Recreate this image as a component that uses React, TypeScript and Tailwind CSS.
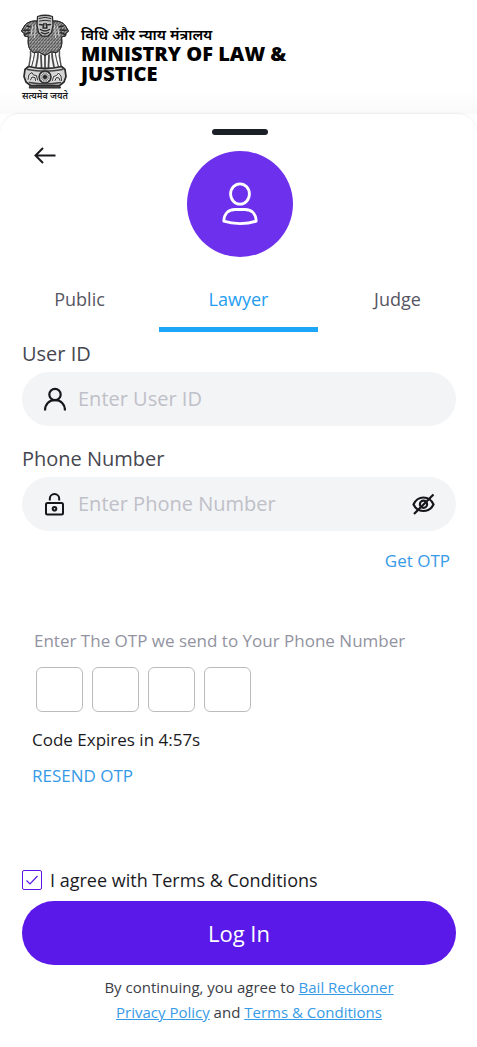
import { useState, type ReactNode } from "react";

function Emblem() {
  return (
    <svg viewBox="0 0 96 150" className="h-[75px] w-12" fill="none" stroke="#2b2b2b" strokeWidth="2" strokeLinecap="round" strokeLinejoin="round" role="img" aria-label="State Emblem of India">
      <defs>
        <pattern id="mane" width="6" height="7" patternUnits="userSpaceOnUse">
          <path d="M0 0q1 5 3 7M3 0q1 4 3 6" stroke="#3a3a3a" strokeWidth="1.600" />
        </pattern>
      </defs>
      <path d="M27 72c1 14-4 24-7 38h56c-3-14-8-24-7-38z" fill="#f4f4f4" strokeWidth="2" />
      <path d="M34 79c0 10-3 20-4 27M40 82c0 9 1 17 1 25M48 82v25M56 82c0 9-1 17-1 25M62 79c0 10 3 20 4 27" strokeWidth="3.500" stroke="#4a4a4a" />
      <path d="M19 75c2 12-3 20-3 31M77 75c-2 12 3 20 3 31" strokeWidth="3" stroke="#555" />
      <path d="M31 14C22 13 11 17 7 24L1 34l5 5 1 5 8 2c-2 14 0 26 10 31l11-1 12 7 12-7 11 1c10-5 12-17 10-31l8-2 1-5 5-5-6-10c-4-7-15-11-24-10z" fill="#b8b8b8" />
      <path d="M31 14C22 13 11 17 7 24L1 34l5 5 1 5 8 2c-2 14 0 26 10 31l11-1 12 7 12-7 11 1c10-5 12-17 10-31l8-2 1-5 5-5-6-10c-4-7-15-11-24-10z" fill="url(#mane)" />
      <path d="M33 5q15-5 30 0l1 18-3 14-7 7H42l-7-7-3-14z" fill="#c4c4c4" strokeWidth="2.500" />
      <path d="M36 9q12-5 24 0M37 14q11-3 22 0" strokeWidth="2" />
      <path d="M37 21l8 1m6 0 8-1M46 19l-2 9h8l-2-9M39 31q9 6 18 0M41 37q7 5 14 0" strokeWidth="3" />
      <path d="M12 24l8 2M6 33l11-1M8 41l9-4M84 24l-8 2M90 33l-11-1M88 41l-9-4" strokeWidth="3" />
      <path d="M23 24l-3 20M29 23l-2 24M73 24l3 20M67 23l2 24" stroke="#eee" strokeWidth="1.500" />
      <path d="M15 105q33 8 66 0l7 6 2 14-4 11-9 7H19l-9-7-4-11 2-14z" fill="#d4d4d4" strokeWidth="3.500" />
      <path d="M13 111q35 7 70 0M17 137q31 6 62 0" strokeWidth="3" stroke="#444" />
      <circle cx="48" cy="126" r="12" fill="#e4e4e4" strokeWidth="3" />
      <circle cx="48" cy="126" r="3" fill="#222" />
      <path d="M48 115v22M37 126h22M40 118l16 16M56 118l-16 16M44 116l8 20M52 116l-8 20M38 122l20 8M58 122l-20 8" strokeWidth="1" />
      <path d="M14 131l2-10 6-4 3 5 6 1 2 9M19 132l3-6 6 1 1 6M63 133l2-8 6-2 4-5 5 6 1 9M68 133l3-6 5 1 2 5" stroke="#f0f0f0" strokeWidth="4" />
      <path d="M14 131l2-10 6-4 3 5 6 1 2 9M19 132l3-6 6 1 1 6M63 133l2-8 6-2 4-5 5 6 1 9M68 133l3-6 5 1 2 5" strokeWidth="2" />
      <path d="M19 143h58l2 5H17z" fill="#444" />
    </svg>
  );
}

function BackArrow() {
  return (
    <svg viewBox="0 0 24 24" className="size-6" fill="none" stroke="#1b1b1f" strokeWidth="2">
      <path d="M22.500 12.500H2.500M10 5l-7.500 7.500L10 20" />
    </svg>
  );
}

function AvatarIcon() {
  return (
    <svg viewBox="0 0 40 48" className="h-12 w-10" fill="none" stroke="#fff" strokeWidth="2.800">
      <ellipse cx="20" cy="14" rx="9.400" ry="10.200" />
      <path d="M15 29.500h10c7 0 11 4.500 11.200 11.700-9.500 3.100-22.900 3.100-32.400 0C4 34 8 29.500 15 29.500z" strokeLinejoin="round" />
    </svg>
  );
}

function UserIcon() {
  return (
    <svg viewBox="0 0 24 24" className="size-6" fill="none" stroke="#17171b" strokeWidth="2.200">
      <circle cx="13" cy="7.500" r="5.700" />
      <path d="M3 23.500c0-6.500 4-10.300 10-10.300s10 3.800 10 10.300" />
    </svg>
  );
}

function LockIcon() {
  return (
    <svg viewBox="0 0 24 24" className="size-6" fill="none" stroke="#17171b" strokeWidth="2">
      <rect x="4" y="11" width="17" height="11.500" rx="1.500" />
      <path d="M7.800 8.500V6.800a4.700 4.700 0 0 1 9.400 0V8.500" />
      <circle cx="12.500" cy="16.800" r="1.800" />
    </svg>
  );
}

function HiddenIcon() {
  return (
    <svg viewBox="0 0 24 24" className="size-6" fill="none" stroke="#17171b" strokeWidth="2.200">
      <path d="M1.500 12.500C3.500 8 7 5.500 11.500 5.500s8 2.500 10 7c-2 4-5.500 6.500-10 6.500s-8-2.500-10-6.500z" strokeLinejoin="round" />
      <circle cx="11.500" cy="12.200" r="3.600" />
      <path d="M2 22 21.500 2.500" />
    </svg>
  );
}

function Field({ id, label, icon, type, placeholder, children }: {
  id: string; label: string; icon: ReactNode; type: string; placeholder: string; children?: ReactNode;
}) {
  return (
    <div>
      <label htmlFor={id} className="block text-xl leading-7 text-[#464750]">{label}</label>
      <div className="mt-1 flex h-[54px] items-center gap-3 rounded-full bg-[#f3f4f6] px-5">
        {icon}
        <input id={id} type={type} placeholder={placeholder} className="min-w-0 flex-1 bg-transparent text-xl text-[#464750] outline-none placeholder:text-[#bfc0c8]" />
        {children}
      </div>
    </div>
  );
}

const roles = ["Public", "Lawyer", "Judge"];

export default function App() {
  const [role, setRole] = useState("Lawyer");
  const [visible, setVisible] = useState(false);
  return (
    <div className="min-h-screen bg-white font-['Open_Sans','Noto_Sans',sans-serif] text-[#1b1b1f]">
      <header className="flex h-[114px] items-start gap-3 bg-linear-to-b from-white from-80% to-[#f9f9f9] px-[21px] pt-3.5">
        <div className="flex w-12 shrink-0 flex-col items-center">
          <Emblem />
          <span className="text-[9px] leading-[14px] font-semibold whitespace-nowrap">सत्यमेव जयते</span>
        </div>
        <div className="pt-2.5 text-black">
          <p className="text-[15px] leading-5 font-semibold">विधि और न्याय मंत्रालय</p>
          <h1 className="text-xl leading-5 font-extrabold">MINISTRY OF LAW &amp;<br />JUSTICE</h1>
        </div>
      </header>

      <main className="rounded-t-[20px] bg-white shadow-[0_-1px_2px_rgba(0,0,0,0.06)]">
        <div className="flex justify-center pt-[15px] pl-0.5">
          <div className="h-1.5 w-14 rounded-full bg-[#1b1f26]" />
        </div>
        <div className="grid grid-cols-[1fr_auto_1fr] items-start pt-2 pr-[31px] pl-[33px]">
          <button type="button" aria-label="Back" className="size-6 justify-self-start"><BackArrow /></button>
          <div className="mt-2 flex size-[106px] items-center justify-center rounded-full bg-[#6d31ed]"><AvatarIcon /></div>
        </div>

        <div role="tablist" className="mt-[18px] grid grid-cols-3">
          {roles.map((r) => (
            <button
              key={r}
              type="button"
              role="tab"
              aria-selected={role === r}
              onClick={() => setRole(r)}
              className={role === r
                ? "h-[57px] border-b-5 border-[#1da6f8] pb-1 text-lg leading-6 text-[#1f9df0]"
                : "h-[57px] border-b-5 border-transparent pb-1 text-lg leading-6 text-[#555661]"}
            >
              {r}
            </button>
          ))}
        </div>

        <form className="pt-2 pr-[21px] pb-5 pl-[22px]" onSubmit={(e) => e.preventDefault()}>
          <div className="flex flex-col gap-[19px]">
            <Field id="user-id" label="User ID" icon={<UserIcon />} type="text" placeholder="Enter User ID" />
            <Field id="phone" label="Phone Number" icon={<LockIcon />} type={visible ? "text" : "password"} placeholder="Enter Phone Number">
              <button type="button" aria-label="Show phone number" onClick={() => setVisible(!visible)}><HiddenIcon /></button>
            </Field>
          </div>
          <div className="mt-[18px] flex justify-end pr-1.5">
            <button type="button" className="text-[17px] leading-6 text-[#379ae6]">Get OTP</button>
          </div>

          <fieldset className="mt-14 pl-3">
            <legend className="text-[17px] leading-6 text-[#9293a0]">Enter The OTP we send to Your Phone Number</legend>
            <div className="mt-3.5 flex gap-[9px] pl-0.5">
              {[1, 2, 3, 4].map((n) => (
                <input key={n} aria-label={`Digit ${n}`} inputMode="numeric" maxLength={1} className="h-[45px] w-[47px] rounded-md border border-[#bcbcc0] text-center text-lg" />
              ))}
            </div>
          </fieldset>
          <div className="flex flex-col items-start gap-3 pt-4 pl-2.5">
            <p className="text-[17px] leading-6">Code Expires in 4:57s</p>
            <button type="button" className="text-[17px] leading-6 text-[#379ae6]">RESEND OTP</button>
          </div>

          <label className="mt-20 flex items-center gap-2 text-lg leading-6">
            <span className="relative flex size-5">
              <input type="checkbox" defaultChecked className="peer size-5 appearance-none rounded-xs border border-[#5a18e9]" />
              <svg viewBox="0 0 20 20" className="pointer-events-none absolute inset-0 size-5 opacity-0 peer-checked:opacity-100" fill="none" stroke="#5a18e9" strokeWidth="1.200">
                <path d="M4.500 10.500 8 14l7.500-8" />
              </svg>
            </span>
            I agree with Terms &amp; Conditions
          </label>
          <button type="submit" className="mt-[9px] h-16 w-full rounded-full bg-[#5a18e9] text-[22px] text-white">Log In</button>
          <p className="mt-2.5 pl-5 text-center text-[15px] leading-[25px] text-[#3c3d46]">
            By continuing, you agree to <a href="#privacy" className="text-[#379ae6] underline">Bail Reckoner<br />Privacy Policy</a> and <a href="#terms" className="text-[#379ae6] underline">Terms &amp; Conditions</a>
          </p>
        </form>
      </main>
    </div>
  );
}
